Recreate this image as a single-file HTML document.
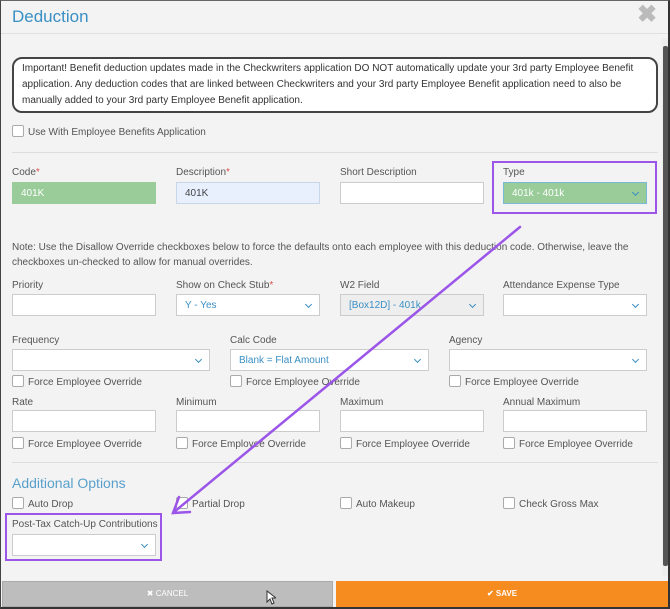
<!DOCTYPE html>
<html><head><meta charset="utf-8"><style>
*{box-sizing:border-box;margin:0;padding:0}
body{width:670px;height:609px;overflow:hidden;background:#f3f3f3;font-family:"Liberation Sans",sans-serif;position:relative;color:#555}
.a{position:absolute}
.frame{left:0;top:0;width:670px;height:609px;border:1px solid #444;border-top:1px solid #666;border-right:2px solid #333;border-bottom:2px solid #333}
.lbl{font-size:10px;color:#555;white-space:nowrap;margin-top:1px}
.req{color:#d9534f}
.inp{background:#fff;border:1px solid #ccc;height:22px;font-size:10px;padding:5px 8px;color:#444}
.sel{color:#3a8fc4}
.sel::after{content:"";position:absolute;right:8px;top:7px;width:4px;height:4px;border-right:1.5px solid #3a8fc4;border-bottom:1.5px solid #3a8fc4;transform:rotate(45deg)}
.cb{width:12px;height:12px;border:1px solid #aaa;background:#fff;border-radius:2px}
.hr{height:1px;background:#ddd}
</style></head><body>
<div class="a" style="left:0;top:0;width:670px;height:34px;background:#f3f3f3;border-bottom:1px solid #e0e0e0"></div>
<div class="a" style="left:12px;top:7px;font-size:17px;color:#3a8fc4">Deduction</div>
<div class="a" style="left:637px;top:2px;font-size:24px;font-weight:bold;color:#bbb;line-height:26px">✖</div>
<div class="a" style="left:662px;top:38px;width:6px;height:538px;background:#eee"></div>
<div class="a" style="left:663px;top:46px;width:5px;height:520px;background:#555;border-radius:2px"></div>

<div class="a" style="left:12px;top:57px;width:646px;height:56px;background:#fff;border:2px solid #444;border-radius:10px;padding:2px 8px;font-size:10px;line-height:16px;color:#333">Important! Benefit deduction updates made in the Checkwriters application DO NOT automatically update your 3rd party Employee Benefit application. Any deduction codes that are linked between Checkwriters and your 3rd party Employee Benefit application need to also be manually added to your 3rd party Employee Benefit application.</div>

<div class="a cb" style="left:12px;top:125px"></div>
<div class="a lbl" style="left:28px;top:126px">Use With Employee Benefits Application</div>
<div class="a hr" style="left:12px;top:152px;width:646px"></div>

<div class="a lbl" style="left:12px;top:166px">Code<span class="req">*</span></div>
<div class="a inp" style="left:12px;top:182px;width:144px;background:#99cc99;border-color:#99cc99;color:#fff">401K</div>
<div class="a lbl" style="left:176px;top:166px">Description<span class="req">*</span></div>
<div class="a inp" style="left:176px;top:182px;width:144px;background:#e8f0fe;border-color:#c8d6ea">401K</div>
<div class="a lbl" style="left:340px;top:166px">Short Description</div>
<div class="a inp" style="left:340px;top:182px;width:144px"></div>
<div class="a lbl" style="left:503px;top:166px">Type</div>
<div class="a inp sel" style="left:503px;top:182px;width:144px;background:#99cc99;border-color:#7ab8d8;color:#fff">401k - 401k</div>
<div class="a" style="left:492px;top:161px;width:165px;height:53px;border:2px solid #9b55e8"></div>

<div class="a" style="left:12px;top:240px;width:640px;font-size:10px;line-height:15px;color:#555">Note: Use the Disallow Override checkboxes below to force the defaults onto each employee with this deduction code. Otherwise, leave the checkboxes un-checked to allow for manual overrides.</div>

<div class="a lbl" style="left:12px;top:279px">Priority</div>
<div class="a inp" style="left:12px;top:294px;width:144px"></div>
<div class="a lbl" style="left:176px;top:279px">Show on Check Stub<span class="req">*</span></div>
<div class="a inp sel" style="left:176px;top:294px;width:144px">Y - Yes</div>
<div class="a lbl" style="left:340px;top:279px">W2 Field</div>
<div class="a inp sel" style="left:340px;top:294px;width:144px;background:#eee">[Box12D] - 401k</div>
<div class="a lbl" style="left:503px;top:279px">Attendance Expense Type</div>
<div class="a inp sel" style="left:503px;top:294px;width:144px"></div>

<div class="a lbl" style="left:12px;top:334px">Frequency</div>
<div class="a inp sel" style="left:12px;top:349px;width:198px"></div>
<div class="a lbl" style="left:230px;top:334px">Calc Code</div>
<div class="a inp sel" style="left:230px;top:349px;width:199px">Blank = Flat Amount</div>
<div class="a lbl" style="left:449px;top:334px">Agency</div>
<div class="a inp sel" style="left:449px;top:349px;width:198px"></div>
<div class="a cb" style="left:12px;top:375px"></div><div class="a lbl" style="left:28px;top:376px">Force Employee Override</div>
<div class="a cb" style="left:230px;top:375px"></div><div class="a lbl" style="left:246px;top:376px">Force Employee Override</div>
<div class="a cb" style="left:449px;top:375px"></div><div class="a lbl" style="left:465px;top:376px">Force Employee Override</div>

<div class="a lbl" style="left:12px;top:396px">Rate</div>
<div class="a inp" style="left:12px;top:410px;width:144px"></div>
<div class="a lbl" style="left:176px;top:396px">Minimum</div>
<div class="a inp" style="left:176px;top:410px;width:144px"></div>
<div class="a lbl" style="left:340px;top:396px">Maximum</div>
<div class="a inp" style="left:340px;top:410px;width:144px"></div>
<div class="a lbl" style="left:503px;top:396px">Annual Maximum</div>
<div class="a inp" style="left:503px;top:410px;width:144px"></div>
<div class="a cb" style="left:12px;top:437px"></div><div class="a lbl" style="left:28px;top:438px">Force Employee Override</div>
<div class="a cb" style="left:176px;top:437px"></div><div class="a lbl" style="left:192px;top:438px">Force Employee Override</div>
<div class="a cb" style="left:340px;top:437px"></div><div class="a lbl" style="left:356px;top:438px">Force Employee Override</div>
<div class="a cb" style="left:503px;top:437px"></div><div class="a lbl" style="left:519px;top:438px">Force Employee Override</div>

<div class="a hr" style="left:12px;top:462px;width:646px"></div>
<div class="a" style="left:12px;top:475px;font-size:14px;color:#5aa0cc">Additional Options</div>
<div class="a cb" style="left:12px;top:497px"></div><div class="a lbl" style="left:28px;top:498px">Auto Drop</div>
<div class="a cb" style="left:176px;top:497px"></div><div class="a lbl" style="left:192px;top:498px">Partial Drop</div>
<div class="a cb" style="left:340px;top:497px"></div><div class="a lbl" style="left:356px;top:498px">Auto Makeup</div>
<div class="a cb" style="left:503px;top:497px"></div><div class="a lbl" style="left:519px;top:498px">Check Gross Max</div>
<div class="a lbl" style="left:12px;top:518px">Post-Tax Catch-Up Contributions</div>
<div class="a inp sel" style="left:12px;top:534px;width:144px"></div>
<div class="a" style="left:5px;top:513px;width:157px;height:48px;border:2px solid #9b55e8"></div>

<svg class="a" style="left:0;top:0" width="670" height="609"><g stroke="#9b55e8" stroke-width="2.5" fill="none" stroke-linecap="round"><line x1="520" y1="227" x2="174" y2="512"/><polyline points="179,497 173,513 190,512"/></g></svg>

<div class="a" style="left:2px;top:581px;width:331px;height:26px;background:#bdbdbd;border:1px solid #aaa;color:#fff;font-size:8px;text-align:center;line-height:24px">✖ CANCEL</div>
<div class="a" style="left:336px;top:581px;width:332px;height:26px;background:#f68b1f;color:#fff;font-size:8px;font-weight:bold;text-align:center;line-height:26px">✔ SAVE</div>
<svg class="a" style="left:266px;top:590px" width="10" height="15"><path d="M1 1 L1 12 L4 9 L6 14 L8 13 L6 8 L10 8 Z" fill="#fff" stroke="#333" stroke-width="1"/></svg>
<div class="a frame"></div>
</body></html>
